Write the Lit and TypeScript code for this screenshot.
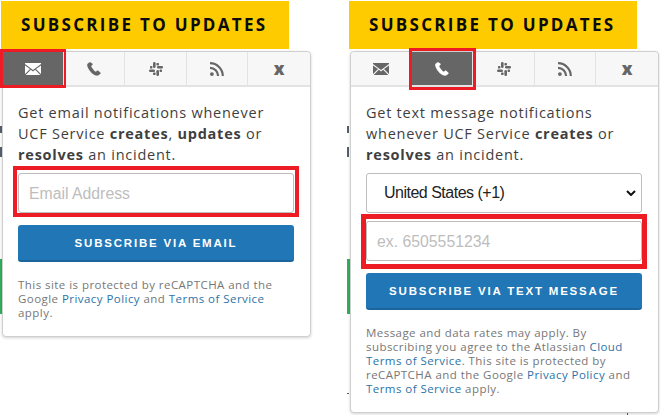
import { LitElement, html, css, svg } from 'lit';
import { customElement, property } from 'lit/decorators.js';

const ICONS: Record<string, unknown> = {
  mail: svg`<svg viewBox="0 0 16 12" width="16" height="12"><path fill="currentColor" d="M0 1 8 7l8-6V0H0zM0 2.400V11l5-5zM16 2.400V11l-5-5zM5.800 6.700.7 12h14.600l-5.100-5.300L8 8.400z"/></svg>`,
  phone: svg`<svg viewBox="0 0 14 14" width="14" height="14"><path fill="currentColor" d="M2.600.3.8 1.600C.2 2.100 0 3 .3 4c.9 3.500 4.600 8.300 8.600 9.600 1 .3 2.200.2 3-.5l1.500-1.300c.4-.3.4-.8.1-1.100l-2.200-2c-.3-.3-.7-.3-1-.1l-1.200.9c-.3.2-.6.2-.9 0C6.700 8.300 5 6 4.300 4.500c-.1-.3 0-.6.2-.8l1-1c.3-.2.3-.6.1-.9L3.700.5C3.400.1 3 0 2.600.300z"/></svg>`,
  slack: svg`<svg viewBox="0 0 14 14" width="14" height="14"><g fill="currentColor"><rect x="4" y="0" width="2.600" height="6" rx="1.300"/><rect x="7.400" y="8" width="2.600" height="6" rx="1.300"/><rect x="0" y="7.400" width="6" height="2.600" rx="1.300"/><rect x="8" y="4" width="6" height="2.600" rx="1.300"/><rect x="1" y="4" width="2.400" height="2.600" rx=".7"/><rect x="10.600" y="7.400" width="2.400" height="2.600" rx=".7"/><rect x="7.400" y="1" width="2.600" height="2.400" rx=".7"/><rect x="4" y="10.600" width="2.600" height="2.400" rx=".7"/></g></svg>`,
  rss: svg`<svg viewBox="0 0 14 14" width="14" height="14"><g fill="none" stroke="currentColor" stroke-width="2.200"><path d="M0 1.200C7 1.200 12.800 7 12.800 14"/><path d="M0 5.900c4.500 0 8.100 3.600 8.100 8.100"/></g><circle cx="1.900" cy="12.100" r="1.900" fill="currentColor"/></svg>`,
};

@customElement('sub-panel')
class SubPanel extends LitElement {
  @property() active = 'mail';
  @property({ type: Boolean }) sms = false;

  static styles = css`
    :host {
      display: block;
      width: 310px;
      font-family: 'Open Sans', 'Liberation Sans', sans-serif;
    }
    .banner {
      width: 288px;
      height: 48px;
      box-sizing: border-box;
      background: #fdcb00;
      color: #0b0b0b;
      font-size: 17px;
      font-weight: 700;
      letter-spacing: 2.300px;
      line-height: 48px;
      padding-left: 20px;
      white-space: nowrap;
    }
    .pop {
      margin: 2px 0 0 1px;
      background: #fff;
      border: 1px solid #cfcfcf;
      border-radius: 4px;
      box-shadow: 0 1px 3px rgba(0, 0, 0, 0.18);
      position: relative;
    }
    .tabs {
      display: grid;
      grid-template-columns: 60px 61px 62px 61px 1fr;
      height: 33px;
      background: #f7f7f7;
      border-bottom: 2px solid #e3e3e3;
      border-radius: 4px 4px 0 0;
    }
    .tab {
      position: relative;
      display: flex;
      align-items: center;
      justify-content: center;
      color: #666;
      border-left: 1px solid #e3e3e3;
      font-size: 17px;
      font-weight: 800;
    }
    .tab:first-child {
      border-left: none;
    }
    .tab.on {
      background: #666;
      color: #fff;
    }
    .mark {
      position: absolute;
      box-sizing: border-box;
      border: 3px solid #ed1c24;
      pointer-events: none;
    }
    .tab .mark {
      left: -3px;
      right: -3px;
      top: -3px;
      bottom: -3px;
    }
    .tab + .tab .mark {
      right: -4px;
      top: -4px;
      bottom: -5px;
    }
    .body {
      padding: 15px 16px 16px 15px;
    }
    p {
      margin: 0;
      font-size: 14.500px;
      line-height: 21px;
      color: #3f3f3f;
      letter-spacing: 0.750px;
    }
    b {
      font-weight: 700;
    }
    .sel {
      margin-top: 8px;
      height: 40px;
      box-sizing: border-box;
      border: 1px solid #bdbdbd;
      border-radius: 3px;
      display: flex;
      align-items: center;
      justify-content: space-between;
      padding: 0 5px 0 17px;
      font-family: 'Liberation Sans', sans-serif;
      font-size: 16px;
      letter-spacing: -0.500px;
      color: #222;
    }
    .field {
      position: relative;
      margin-top: 8px;
      height: 40px;
      box-sizing: border-box;
      border: 1px solid #bdbdbd;
      border-radius: 3px;
      display: flex;
      align-items: center;
      padding: 2px 0 0 10px;
      font-family: 'Liberation Sans', sans-serif;
      font-size: 15.800px;
      color: #bdbdbd;
    }
    .field .mark {
      border-width: 4px;
      left: -6px;
      right: -6px;
      top: -8px;
      bottom: -5px;
    }
    .sel + .field .mark {
      border-width: 5px;
      bottom: -9px;
    }
    .btn {
      margin-top: 12px;
      height: 37px;
      box-sizing: border-box;
      background: #2176b5;
      border-bottom: 2px solid #1c659c;
      border-radius: 3px;
      color: #fff;
      display: flex;
      align-items: center;
      justify-content: center;
      font-family: 'Liberation Sans', sans-serif;
      font-size: 11.500px;
      font-weight: 700;
      letter-spacing: 1.800px;
    }
    .fine {
      margin-top: 16px;
      font-size: 11.500px;
      line-height: 14px;
      color: #777;
      letter-spacing: 0.450px;
    }
    a {
      color: #2c74a8;
    }
  `;

  render() {
    return html`
      <div class="banner">SUBSCRIBE TO UPDATES</div>
      <div class="pop">
        <div class="tabs">
          ${['mail', 'phone', 'slack', 'rss'].map(
            (t) => html`<div class="tab ${this.active === t ? 'on' : ''}">
              ${ICONS[t]}${this.active === t ? html`<span class="mark"></span>` : ''}
            </div>`
          )}
          <div class="tab">x</div>
        </div>
        <div class="body">
          ${this.sms ? this.renderSms() : this.renderEmail()}
        </div>
      </div>
    `;
  }

  renderEmail() {
    return html`
      <p>Get email notifications whenever UCF Service <b>creates</b>, <b>updates</b> or <b>resolves</b> an incident.</p>
      <div class="field">Email Address<span class="mark"></span></div>
      <div class="btn">SUBSCRIBE VIA EMAIL</div>
      <div class="fine">
        This site is protected by reCAPTCHA and the Google <a>Privacy Policy</a> and <a>Terms of Service</a> apply.
      </div>
    `;
  }

  renderSms() {
    return html`
      <p>Get text message notifications whenever UCF Service <b>creates</b> or <b>resolves</b> an incident.</p>
      <div class="sel">
        United States (+1)
        <svg viewBox="0 0 10 6" width="10" height="6"><path d="M1 1l4 4 4-4" fill="none" stroke="#111" stroke-width="2"/></svg>
      </div>
      <div class="field">ex. 6505551234<span class="mark"></span></div>
      <div class="btn">SUBSCRIBE VIA TEXT MESSAGE</div>
      <div class="fine">
        Message and data rates may apply. By subscribing you agree to the Atlassian <a>Cloud Terms of Service</a>. This site is protected by reCAPTCHA and the Google <a>Privacy Policy</a> and <a>Terms of Service</a> apply.
      </div>
    `;
  }
}

@customElement('app-root')
export class AppRoot extends LitElement {
  static styles = css`
    :host {
      display: block;
      width: 660px;
      height: 415px;
      overflow: hidden;
      background: #fff;
      position: relative;
    }
    .wrap {
      display: flex;
      gap: 38px;
      padding: 1px 0 0 1px;
    }
    .green {
      position: absolute;
      top: 259px;
      width: 3px;
      height: 55px;
      background: #2fb25c;
    }
    .tick {
      position: absolute;
      background: #56606e;
    }
  `;

  render() {
    // bits of the page behind the popover, showing at its left edge
    const ticks = [
      [0, 126, 2, 7],
      [0, 147, 2, 10],
      [347, 126, 2, 7],
      [347, 147, 2, 10],
      [347, 393, 2, 1],
      [627, 411, 1, 4],
    ];
    return html`
      <div class="green" style="left:0"></div>
      <div class="green" style="left:347px"></div>
      ${ticks.map(
        ([x, y, w, h]) => html`<div class="tick" style="left:${x}px;top:${y}px;width:${w}px;height:${h}px"></div>`
      )}
      <div class="wrap">
        <sub-panel active="mail"></sub-panel>
        <sub-panel active="phone" sms></sub-panel>
      </div>
    `;
  }
}
